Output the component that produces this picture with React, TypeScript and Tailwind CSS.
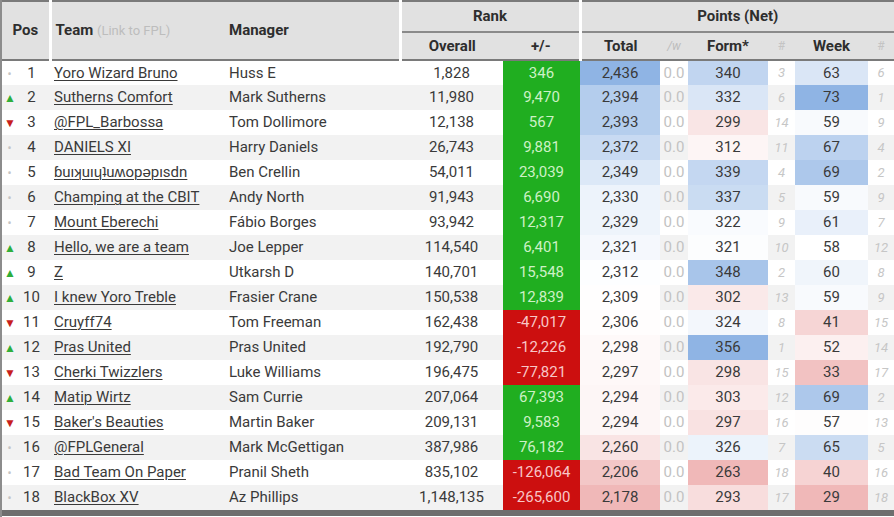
import React from "react";

type Move = "up" | "down" | "same";

interface Row {
  pos: number;
  move: Move;
  team: string;
  manager: string;
  overall: string;
  change: number;
  total: number;
  form: number;
  formRank: number;
  week: number;
  weekRank: number;
}

const rows: Row[] = [
  { pos: 1, move: "same", team: "Yoro Wizard Bruno", manager: "Huss E", overall: "1,828", change: 346, total: 2436, form: 340, formRank: 3, week: 63, weekRank: 6 },
  { pos: 2, move: "up", team: "Sutherns Comfort", manager: "Mark Sutherns", overall: "11,980", change: 9470, total: 2394, form: 332, formRank: 6, week: 73, weekRank: 1 },
  { pos: 3, move: "down", team: "@FPL_Barbossa", manager: "Tom Dollimore", overall: "12,138", change: 567, total: 2393, form: 299, formRank: 14, week: 59, weekRank: 9 },
  { pos: 4, move: "same", team: "DANIELS XI", manager: "Harry Daniels", overall: "26,743", change: 9881, total: 2372, form: 312, formRank: 11, week: 67, weekRank: 4 },
  { pos: 5, move: "same", team: "ɓuıʞuıɥʇuʍopǝpısdn", manager: "Ben Crellin", overall: "54,011", change: 23039, total: 2349, form: 339, formRank: 4, week: 69, weekRank: 2 },
  { pos: 6, move: "same", team: "Champing at the CBIT", manager: "Andy North", overall: "91,943", change: 6690, total: 2330, form: 337, formRank: 5, week: 59, weekRank: 9 },
  { pos: 7, move: "same", team: "Mount Eberechi", manager: "Fábio Borges", overall: "93,942", change: 12317, total: 2329, form: 322, formRank: 9, week: 61, weekRank: 7 },
  { pos: 8, move: "up", team: "Hello, we are a team", manager: "Joe Lepper", overall: "114,540", change: 6401, total: 2321, form: 321, formRank: 10, week: 58, weekRank: 12 },
  { pos: 9, move: "up", team: "Z", manager: "Utkarsh D", overall: "140,701", change: 15548, total: 2312, form: 348, formRank: 2, week: 60, weekRank: 8 },
  { pos: 10, move: "up", team: "I knew Yoro Treble", manager: "Frasier Crane", overall: "150,538", change: 12839, total: 2309, form: 302, formRank: 13, week: 59, weekRank: 9 },
  { pos: 11, move: "down", team: "Cruyff74", manager: "Tom Freeman", overall: "162,438", change: -47017, total: 2306, form: 324, formRank: 8, week: 41, weekRank: 15 },
  { pos: 12, move: "up", team: "Pras United", manager: "Pras United", overall: "192,790", change: -12226, total: 2298, form: 356, formRank: 1, week: 52, weekRank: 14 },
  { pos: 13, move: "down", team: "Cherki Twizzlers", manager: "Luke Williams", overall: "196,475", change: -77821, total: 2297, form: 298, formRank: 15, week: 33, weekRank: 17 },
  { pos: 14, move: "up", team: "Matip Wirtz", manager: "Sam Currie", overall: "207,064", change: 67393, total: 2294, form: 303, formRank: 12, week: 69, weekRank: 2 },
  { pos: 15, move: "down", team: "Baker's Beauties", manager: "Martin Baker", overall: "209,131", change: 9583, total: 2294, form: 297, formRank: 16, week: 57, weekRank: 13 },
  { pos: 16, move: "same", team: "@FPLGeneral", manager: "Mark McGettigan", overall: "387,986", change: 76182, total: 2260, form: 326, formRank: 7, week: 65, weekRank: 5 },
  { pos: 17, move: "same", team: "Bad Team On Paper", manager: "Pranil Sheth", overall: "835,102", change: -126064, total: 2206, form: 263, formRank: 18, week: 40, weekRank: 16 },
  { pos: 18, move: "same", team: "BlackBox XV", manager: "Az Phillips", overall: "1,148,135", change: -265600, total: 2178, form: 293, formRank: 17, week: 29, weekRank: 18 },
];

// diverging heat colour: pink below mid, blue above
function heat(v: number, min: number, mid: number, max: number) {
  const mix = (c: number[], t: number) =>
    `rgb(${c.map((x) => Math.round(255 + (x - 255) * t)).join(",")})`;
  if (v >= mid) return mix([143, 180, 228], Math.min(1, (v - mid) / (max - mid)));
  return mix([240, 184, 184], Math.min(1, (mid - v) / (mid - min)));
}

const fmt = (n: number) => n.toLocaleString("en-US");

function MoveIcon({ move }: { move: Move }) {
  if (move === "up") return <span className="text-[12px] text-[#2fae3a]">▲</span>;
  if (move === "down") return <span className="text-[12px] text-[#c81e1e]">▼</span>;
  return <span className="text-[12px] text-[#c4c4c4]">•</span>;
}

export default function App() {
  return (
    <div
      className="w-[894px] h-[517px] overflow-hidden bg-white text-[15px] text-[#3a3a3a] border-l-2 border-[#8c8c8c]"
      style={{ fontFamily: "Roboto, 'Liberation Sans', sans-serif" }}
    >
      <table className="table-fixed border-collapse w-[892px]">
        <colgroup>
          <col className="w-[48px]" />
          <col className="w-[175px]" />
          <col className="w-[175px]" />
          <col className="w-[103px]" />
          <col className="w-[77px]" />
          <col className="w-[80px]" />
          <col className="w-[28px]" />
          <col className="w-[80px]" />
          <col className="w-[27px]" />
          <col className="w-[73px]" />
          <col className="w-[26px]" />
        </colgroup>
        <thead className="bg-[#e1e1e1] font-bold text-[#2e2e2e]">
          <tr className="h-[31px] border-t-2 border-[#7a7a7a]">
            <th rowSpan={2} className="text-center border-r-[3px] border-r-white border-b-2 border-b-[#7a7a7a]">
              Pos
            </th>
            <th rowSpan={2} className="text-left pl-1 border-b-2 border-b-[#7a7a7a]">
              Team <span className="font-normal text-[13px] text-[#bdbdbd]">(Link to FPL)</span>
            </th>
            <th rowSpan={2} className="text-left pl-1 border-r-[3px] border-r-white border-b-2 border-b-[#7a7a7a]">
              Manager
            </th>
            <th colSpan={2} className="text-center border-b-2 border-b-[#8a8a8a] border-r-[3px] border-r-white">
              Rank
            </th>
            <th colSpan={6} className="text-center border-b-2 border-b-[#8a8a8a]">
              Points (Net)
            </th>
          </tr>
          <tr className="h-[28px]">
            <th className="text-center border-b-2 border-b-[#7a7a7a]">Overall</th>
            <th className="text-center border-b-2 border-b-[#7a7a7a] border-r-[3px] border-r-white">+/-</th>
            <th className="text-center border-b-2 border-b-[#7a7a7a]">Total</th>
            <th className="text-center border-b-2 border-b-[#7a7a7a] font-normal italic text-[12px] text-[#bcbcbc]">/w</th>
            <th className="text-center border-b-2 border-b-[#7a7a7a]">Form*</th>
            <th className="text-center border-b-2 border-b-[#7a7a7a] font-normal text-[12px] text-[#c4c4c4]">#</th>
            <th className="text-center border-b-2 border-b-[#7a7a7a]">Week</th>
            <th className="text-center border-b-2 border-b-[#7a7a7a] font-normal text-[12px] text-[#c4c4c4]">#</th>
          </tr>
        </thead>
        <tbody>
          {rows.map((r) => (
            <tr key={r.pos} className={`h-[25px] ${r.pos % 2 === 0 ? "bg-[#f2f2f2]" : "bg-white"}`}>
              <td className="p-0">
                <div className="flex items-center">
                  <span className="w-[13px] text-center pl-[2px]">
                    <MoveIcon move={r.move} />
                  </span>
                  <span className="flex-1 text-center pr-[2px]">{r.pos}</span>
                </div>
              </td>
              <td className="pl-1 truncate">
                <span className="underline decoration-1 underline-offset-2">{r.team}</span>
              </td>
              <td className="pl-1 truncate">{r.manager}</td>
              <td className="text-center">{r.overall}</td>
              <td
                className={`text-center ${
                  r.change >= 0 ? "bg-[#20ae20] text-[#cdf1c6]" : "bg-[#cc0f0f] text-[#f8c6c6]"
                }`}
              >
                {fmt(r.change)}
              </td>
              <td className="text-center" style={{ backgroundColor: heat(r.total, 2178, 2310, 2436) }}>
                {fmt(r.total)}
              </td>
              <td className="text-center text-[#c2c2c2]">0.0</td>
              <td className="text-center" style={{ backgroundColor: heat(r.form, 263, 320, 356) }}>
                {r.form}
              </td>
              <td className="text-center italic text-[13px] text-[#c6c6c6]">{r.formRank}</td>
              <td className="text-center" style={{ backgroundColor: heat(r.week, 29, 58, 73) }}>
                {r.week}
              </td>
              <td className="text-center italic text-[13px] text-[#c6c6c6]">{r.weekRank}</td>
            </tr>
          ))}
        </tbody>
      </table>
      <div className="h-[6px] bg-[#6e6e6e]" />
    </div>
  );
}
